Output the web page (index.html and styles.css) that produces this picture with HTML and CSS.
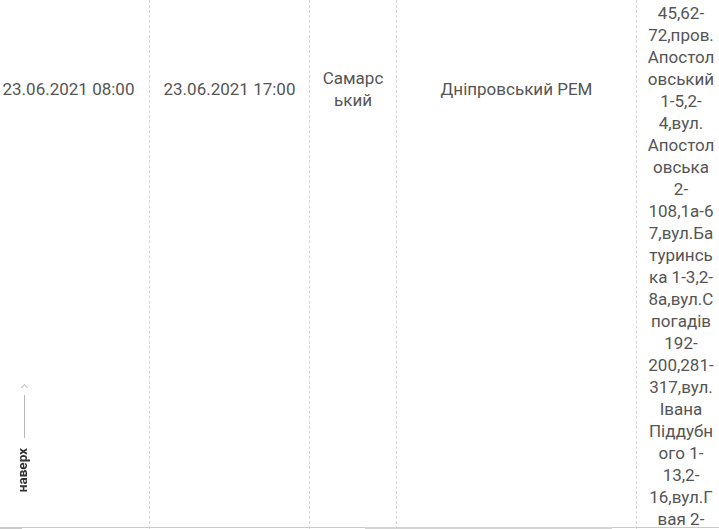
FILE: index.html
```html
<!DOCTYPE html>
<html lang="uk">
<head>
    <meta charset="UTF-8">
    <meta name="viewport" content="width=device-width, initial-scale=1.0">
    <title>Графік відключень</title>
    <link rel="stylesheet" href="styles.css">
</head>
<body>
    <div class="outage-table">
        <div class="row">
            <div class="cell col-start"><div class="cell-inner">23.06.2021 08:00</div></div>
            <div class="cell col-end"><div class="cell-inner">23.06.2021 17:00</div></div>
            <div class="cell col-district"><div class="cell-inner">Самарський</div></div>
            <div class="cell col-rem"><div class="cell-inner">Дніпровський РЕМ</div></div>
            <div class="cell col-address">45,62-72,пров. Апостоловський 1-5,2-4,вул. Апостоловська 2-108,1а-67,вул.Батуринська 1-3,2-8а,вул.Спогадів 192-200,281-317,вул. Івана Піддубного 1-13,2-16,вул.Гвая 2-</div>
        </div>
    </div>

    <!-- Кнопка "наверх" -->
    <a class="to-top" href="#">
        <span class="to-top-arrow"></span>
        <span class="to-top-line"></span>
        <span class="to-top-text">наверх</span>
    </a>

    <div class="hscroll">
        <span class="hscroll-thumb thumb-left"></span>
        <span class="hscroll-thumb thumb-mid"></span>
    </div>
</body>
</html>
```

FILE: styles.css
```css
* {
    margin: 0;
    padding: 0;
    box-sizing: border-box;
}

body {
    font-family: Roboto, "Liberation Sans", sans-serif;
    font-size: 17px;
    line-height: 22px;
    color: #555;
    background: #fff;
    height: 529px;
    overflow: hidden;
}

.outage-table {
    width: 719px;
    height: 529px;
    overflow: hidden;
}

.row {
    display: flex;
    height: 100%;
}

.cell {
    min-width: 0;
    border-right: 1px dashed #d6d6d6;
    text-align: center;
    overflow-wrap: anywhere;
}

.cell-inner {
    height: 178px;
    display: flex;
    flex-direction: column;
    justify-content: center;
}

.col-start {
    flex: 0 0 150px;
    padding-right: 12px;
}

.col-end {
    flex: 0 0 160px;
}

.col-district {
    flex: 0 0 87px;
    padding: 0 12px;
}

.col-rem {
    flex: 0 0 240px;
}

.col-address {
    flex: 0 0 88px;
    padding: 2px 9px 0;
    border-right: none;
}

/* кнопка наверх */
.to-top {
    position: fixed;
    left: 14px;
    top: 383px;
    width: 20px;
    display: flex;
    flex-direction: column;
    align-items: center;
    text-decoration: none;
}

.to-top-arrow {
    width: 5px;
    height: 5px;
    border-left: 1px solid #c4c4c4;
    border-top: 1px solid #c4c4c4;
    transform: rotate(45deg);
    margin-top: 2px;
}

.to-top-line {
    width: 1px;
    height: 43px;
    background: #b8b8b8;
    margin-top: 5px;
}

.to-top-text {
    writing-mode: vertical-rl;
    transform: rotate(180deg);
    font-size: 13.5px;
    line-height: 14px;
    font-weight: bold;
    color: #333;
    margin-top: 10px;
    margin-left: -4px;
}

/* нижня смуга прокрутки */
.hscroll {
    position: fixed;
    left: 0;
    right: 0;
    bottom: 0;
    height: 2px;
    border-top: 1px solid #cacaca;
}

.hscroll-thumb {
    position: absolute;
    top: -1px;
    height: 2px;
    background: #cacaca;
}

.thumb-left {
    left: 0;
    width: 22px;
}

.thumb-mid {
    left: 365px;
    width: 247px;
    background: #d4d4d4;
}
```
